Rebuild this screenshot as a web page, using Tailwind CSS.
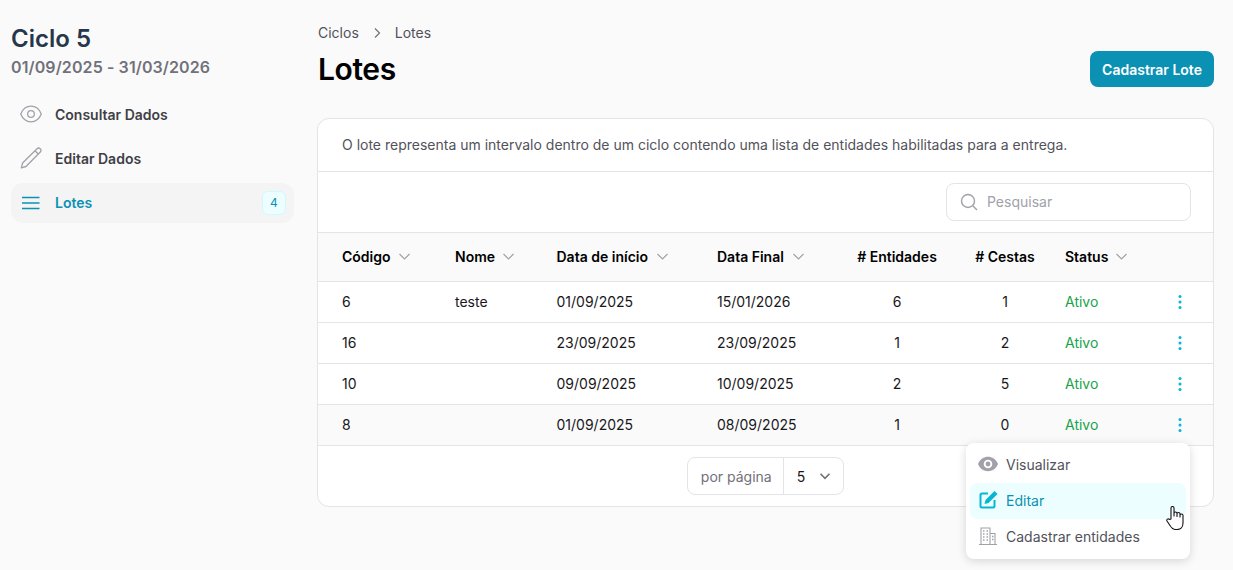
<!DOCTYPE html>
<html lang="en">
<head>
    <meta charset="UTF-8">
    <title>Lotes</title>
    <script src="https://cdn.jsdelivr.net/npm/@tailwindcss/browser@4"></script>
</head>
<body class="bg-[#fafafa] font-[Inter,sans-serif] h-[570px] overflow-hidden">
    <div class="flex">
        <!-- Sidebar -->
        <aside class="w-[283px] ml-[11px] shrink-0">
            <h2 class="mt-[24px] text-[24px] leading-[30px] font-semibold text-[#27364b]">Ciclo 5</h2>
            <p class="mt-[1px] text-[16px] leading-[24px] font-semibold tracking-[0.1px] text-[#71717a]">01/09/2025 - 31/03/2026</p>
            <nav class="mt-[16px] flex flex-col gap-1 text-[14px] font-semibold text-[#3f3f46]">
                <a class="h-10 flex items-center px-[9px] pb-0.5 gap-[13px]">
                    <svg class="w-[22px] h-[22px] text-[#a1a1aa]" viewBox="0 0 22 22" fill="none" stroke="currentColor" stroke-width="1.300"><path d="M.7 11C3 5.500 7 3.200 11 3.200s8 2.300 10.300 7.800c-2.300 5.500-6.300 7.800-10.300 7.800S3 16.500.7 11z"/><circle cx="11" cy="11" r="3.300"/></svg>
                    Consultar Dados
                </a>
                <a class="h-10 flex items-center px-[9px] pb-0.5 gap-[13px]">
                    <svg class="w-[22px] h-[22px] text-[#a1a1aa]" viewBox="0 0 22 22" fill="none" stroke="currentColor" stroke-width="1.300" stroke-linejoin="round"><path d="M17 1.800a2.300 2.300 0 013.300 3.200L6 19.500l-4.700 1.300L2.600 16z"/><path d="M15 3.800l3.300 3.200"/></svg>
                    Editar Dados
                </a>
                <a class="h-10 flex items-center pl-[9px] pr-[8px] gap-[13px] rounded-xl bg-[#f4f4f5] text-[#0b91b3]">
                    <svg class="w-[22px] h-[22px]" viewBox="0 0 22 22" fill="none" stroke="currentColor" stroke-width="1.500"><path d="M2 5.500h17.500M2 11h17.500M2 16.500h17.500"/></svg>
                    <span class="flex-1 pb-0.5">Lotes</span>
                    <span class="w-6 h-6 flex items-center justify-center rounded-md border border-[#cffafe] bg-[#ecfeff] text-[12px] font-normal">4</span>
                </a>
            </nav>
        </aside>

        <!-- Main -->
        <main class="ml-[23px] w-[897px] shrink-0 relative">
            <div class="mt-[24px] pl-px flex items-center text-[14px] leading-[18px] text-[#52525b]">
                <span>Ciclos</span>
                <svg class="w-4 h-4 mx-[10px] text-[#71717a]" viewBox="0 0 16 16" fill="none" stroke="currentColor" stroke-width="1.200"><path d="M6 3.500l4.500 4.500L6 12.500"/></svg>
                <span>Lotes</span>
            </div>
            <div class="flex justify-between items-start">
                <h1 class="mt-[9px] pl-px text-[30px] leading-[36px] font-semibold tracking-[-0.4px] text-black">Lotes</h1>
                <button class="mt-[9px] h-9 w-[124px] rounded-lg bg-[#0b91b3] text-white text-[14px] font-semibold">Cadastrar Lote</button>
            </div>

            <div class="mt-[31px] h-[389px] bg-white border border-[#e4e4e7] rounded-xl">
                <p class="h-[53px] flex items-center pb-px pl-6 text-[14px] text-[#52525b] border-b border-[#e4e4e7]">O lote representa um intervalo dentro de um ciclo contendo uma lista de entidades habilitadas para a entrega.</p>
                <div class="h-[61px] flex items-center justify-end pr-[22px] border-b border-[#e4e4e7]">
                    <div class="w-[245px] h-[38px] flex items-center gap-[9px] pl-[13px] rounded-lg border border-[#e4e4e7] bg-white text-[14px] text-[#a1a1aa]">
                        <svg class="w-[18px] h-[18px] text-[#a1a1aa]" viewBox="0 0 18 18" fill="none" stroke="currentColor" stroke-width="1.400"><circle cx="8" cy="8" r="6.500"/><path d="M12.800 12.800L17 17"/></svg>
                        <span class="pb-0.5">Pesquisar</span>
                    </div>
                </div>

                <div class="text-[14px] text-[#18181b]">
                    <div class="grid grid-cols-[137px_101.5px_160.5px_120px_120px_96px_93px_68px] items-center h-[49px] pb-0.5 bg-[#fafafa] border-b border-[#e4e4e7] font-semibold text-black">
                        <div class="pl-6 flex items-center gap-[7px]">Código <svg class="w-[13px] h-[13px] text-[#a1a1aa]" viewBox="0 0 13 13" fill="none" stroke="currentColor" stroke-width="1.200"><path d="M1.500 4l5 5 5-5"/></svg></div>
                        <div class="flex items-center gap-[7px]">Nome <svg class="w-[13px] h-[13px] text-[#a1a1aa]" viewBox="0 0 13 13" fill="none" stroke="currentColor" stroke-width="1.200"><path d="M1.500 4l5 5 5-5"/></svg></div>
                        <div class="flex items-center gap-[8px]">Data de início <svg class="w-[13px] h-[13px] text-[#a1a1aa]" viewBox="0 0 13 13" fill="none" stroke="currentColor" stroke-width="1.200"><path d="M1.500 4l5 5 5-5"/></svg></div>
                        <div class="flex items-center gap-[8px]">Data Final <svg class="w-[13px] h-[13px] text-[#a1a1aa]" viewBox="0 0 13 13" fill="none" stroke="currentColor" stroke-width="1.200"><path d="M1.500 4l5 5 5-5"/></svg></div>
                        <div class="text-center">#&nbsp;Entidades</div>
                        <div class="text-center">#&nbsp;Cestas</div>
                        <div class="col-span-2 pl-3 flex items-center gap-[7px]">Status <svg class="w-[13px] h-[13px] text-[#a1a1aa]" viewBox="0 0 13 13" fill="none" stroke="currentColor" stroke-width="1.200"><path d="M1.500 4l5 5 5-5"/></svg></div>
                    </div>

                    <div class="grid grid-cols-[137px_101.5px_160.5px_120px_120px_96px_93px_68px] items-center h-[41px] pb-0.5 border-b border-[#e4e4e7]">
                        <div class="pl-6">6</div><div>teste</div><div>01/09/2025</div><div>15/01/2026</div><div class="text-center">6</div><div class="text-center">1</div><div class="pl-3 text-[#16a34a]">Ativo</div>
                        <div class="flex justify-center pt-0.5"><svg class="w-1 h-4 text-[#06b6d4]" viewBox="0 0 4 16" fill="currentColor"><circle cx="2" cy="2.500" r="1.500"/><circle cx="2" cy="8" r="1.500"/><circle cx="2" cy="13.500" r="1.500"/></svg></div>
                    </div>
                    <div class="grid grid-cols-[137px_101.5px_160.5px_120px_120px_96px_93px_68px] items-center h-[41px] pb-0.5 border-b border-[#e4e4e7]">
                        <div class="pl-6">16</div><div></div><div>23/09/2025</div><div>23/09/2025</div><div class="text-center">1</div><div class="text-center">2</div><div class="pl-3 text-[#16a34a]">Ativo</div>
                        <div class="flex justify-center pt-0.5"><svg class="w-1 h-4 text-[#06b6d4]" viewBox="0 0 4 16" fill="currentColor"><circle cx="2" cy="2.500" r="1.500"/><circle cx="2" cy="8" r="1.500"/><circle cx="2" cy="13.500" r="1.500"/></svg></div>
                    </div>
                    <div class="grid grid-cols-[137px_101.5px_160.5px_120px_120px_96px_93px_68px] items-center h-[41px] pb-0.5 border-b border-[#e4e4e7]">
                        <div class="pl-6">10</div><div></div><div>09/09/2025</div><div>10/09/2025</div><div class="text-center">2</div><div class="text-center">5</div><div class="pl-3 text-[#16a34a]">Ativo</div>
                        <div class="flex justify-center pt-0.5"><svg class="w-1 h-4 text-[#06b6d4]" viewBox="0 0 4 16" fill="currentColor"><circle cx="2" cy="2.500" r="1.500"/><circle cx="2" cy="8" r="1.500"/><circle cx="2" cy="13.500" r="1.500"/></svg></div>
                    </div>
                    <div class="grid grid-cols-[137px_101.5px_160.5px_120px_120px_96px_93px_68px] items-center h-[41px] pb-0.5 border-b border-[#e4e4e7] bg-[#fafafa]">
                        <div class="pl-6">8</div><div></div><div>01/09/2025</div><div>08/09/2025</div><div class="text-center">1</div><div class="text-center">0</div><div class="pl-3 text-[#16a34a]">Ativo</div>
                        <div class="flex justify-center pt-0.5"><svg class="w-1 h-4 text-[#06b6d4]" viewBox="0 0 4 16" fill="currentColor"><circle cx="2" cy="2.500" r="1.500"/><circle cx="2" cy="8" r="1.500"/><circle cx="2" cy="13.500" r="1.500"/></svg></div>
                    </div>
                </div>

                <div class="flex justify-center pt-[11px]">
                    <div class="h-[38px] flex items-center rounded-lg border border-[#e4e4e7] text-[14px]">
                        <span class="h-full flex items-center pl-[13px] pr-[11px] border-r border-[#e4e4e7] text-[#71717a]">por página</span>
                        <span class="pl-[13px] text-[#18181b]">5</span>
                        <svg class="w-3 h-3 ml-[14px] mr-[12px] text-[#71717a]" viewBox="0 0 12 12" fill="none" stroke="currentColor" stroke-width="1.600"><path d="M1.500 3.800l4.500 4.500 4.500-4.500"/></svg>
                    </div>
                </div>
            </div>

            <!-- Row actions menu -->
            <div class="absolute left-[649px] top-[443px] w-[224px] h-[116px] bg-white rounded-lg shadow-[0_2px_10px_rgba(0,0,0,0.15)] p-1 text-[14px] text-[#52525b]">
                <div class="h-9 flex items-center gap-2 pl-2 pb-0.5">
                    <svg class="w-5 h-5 text-[#a1a1aa]" viewBox="0 0 20 20" fill="currentColor"><path fill-rule="evenodd" d="M0 10C2 5 6 2.800 10 2.800S18 5 20 10c-2 5-6 7.200-10 7.200S2 15 0 10zM10 14.300a4.300 4.300 0 100-8.600 4.300 4.300 0 000 8.600z"/><circle cx="10" cy="10" r="2.400"/></svg>
                    Visualizar
                </div>
                <div class="h-9 flex items-center gap-2 pl-2 pb-0.5 rounded-lg bg-[#ecfeff] text-[#0b91b3]">
                    <svg class="w-5 h-5 text-[#06b6d4]" viewBox="0 0 20 20" fill="none" stroke="currentColor" stroke-width="2"><path d="M10 3.500H4A1.500 1.500 0 002.500 5v11A1.500 1.500 0 004 17.500h11a1.500 1.500 0 001.500-1.500v-6"/><path fill="currentColor" stroke="none" d="M16.500 1l3 3-9 9-4 1 1-4z"/></svg>
                    Editar
                </div>
                <div class="h-9 flex items-center gap-2 pl-2 pb-0.5">
                    <svg class="w-5 h-5 text-[#a1a1aa]" viewBox="0 0 20 20" fill="none" stroke="currentColor" stroke-width="1.100"><path d="M1 18.500h18M3 18.500V2h9v16.500M12 7.500h5v11"/><path stroke-width="1.500" d="M5 5h1.500M8.500 5H10M5 8h1.500M8.500 8H10M5 11h1.500M8.500 11H10M5 14h1.500M8.500 14H10M14 10.500h1.500M14 13.500h1.500"/></svg>
                    Cadastrar entidades
                </div>
                <!-- mouse cursor -->
                <svg class="absolute left-[200px] top-[63px] w-[19px] h-[24px]" viewBox="0 0 19 24" fill="#fff" stroke="#111" stroke-width="1.100" stroke-linejoin="round"><path d="M5 13V2a1.500 1.500 0 013 0v8V7.500a1.500 1.500 0 013 0v3V8a1.500 1.500 0 013 0v3V9.500a1.500 1.500 0 013 0V17c0 4-2.500 6.500-6 6.500H9.500c-2.500 0-4-1.500-5.500-4L1 15c-.9-1.500 1.200-3 2.500-1.500z"/></svg>
            </div>
        </main>
    </div>
</body>
</html>
